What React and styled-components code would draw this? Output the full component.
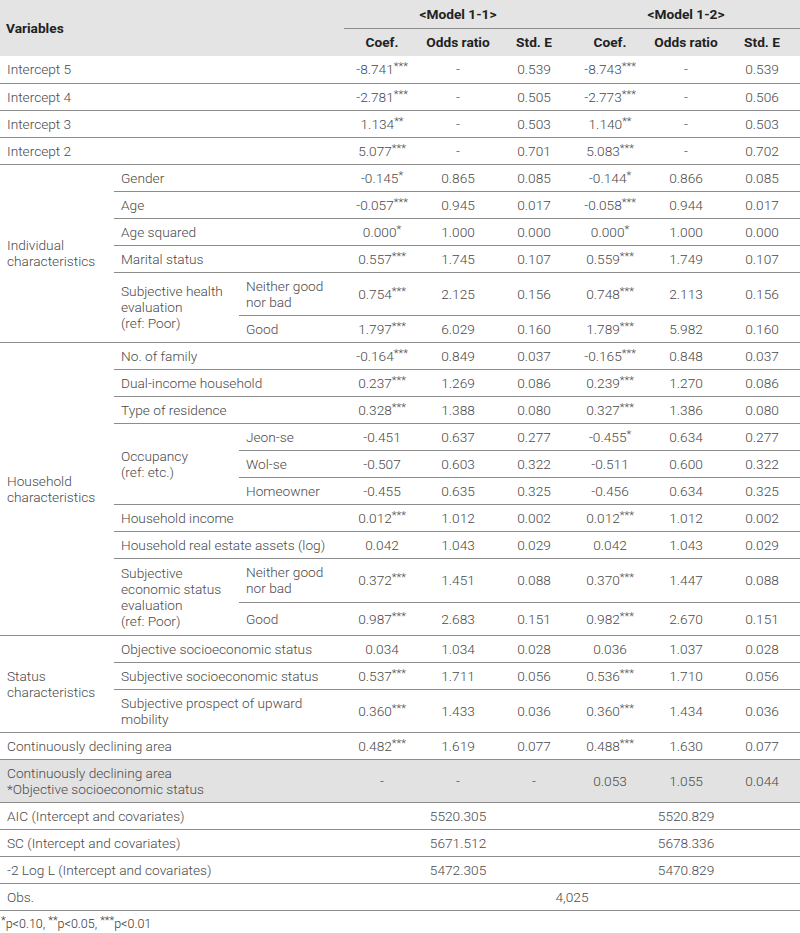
import React from "react";
import styled, { createGlobalStyle } from "styled-components";

const GlobalStyle = createGlobalStyle`
  body {
    margin: 0;
    background: #ffffff;
    font-family: Roboto, "Liberation Sans", sans-serif;
  }
`;

const split = (v) => {
  const m = v.match(/^(.*?)(\**)$/);
  return [m[1], m[2]];
};

const Value = ({ v }) => {
  const [num, stars] = split(v);
  return (
    <>
      {num}
      {stars && <Stars>{stars}</Stars>}
    </>
  );
};

const individual = [
  ["Gender", "-0.145*", "0.865", "0.085", "-0.144*", "0.866", "0.085"],
  ["Age", "-0.057***", "0.945", "0.017", "-0.058***", "0.944", "0.017"],
  ["Age squared", "0.000*", "1.000", "0.000", "0.000*", "1.000", "0.000"],
  ["Marital status", "0.557***", "1.745", "0.107", "0.559***", "1.749", "0.107"],
];

const household = [
  ["No. of family", "-0.164***", "0.849", "0.037", "-0.165***", "0.848", "0.037"],
  ["Dual-income household", "0.237***", "1.269", "0.086", "0.239***", "1.270", "0.086"],
  ["Type of residence", "0.328***", "1.388", "0.080", "0.327***", "1.386", "0.080"],
];

const occupancy = [
  ["Jeon-se", "-0.451", "0.637", "0.277", "-0.455*", "0.634", "0.277"],
  ["Wol-se", "-0.507", "0.603", "0.322", "-0.511", "0.600", "0.322"],
  ["Homeowner", "-0.455", "0.635", "0.325", "-0.456", "0.634", "0.325"],
];

const household2 = [
  ["Household income", "0.012***", "1.012", "0.002", "0.012***", "1.012", "0.002"],
  ["Household real estate assets (log)", "0.042", "1.043", "0.029", "0.042", "1.043", "0.029"],
];

const intercepts = [
  ["Intercept 5", "-8.741***", "-", "0.539", "-8.743***", "-", "0.539"],
  ["Intercept 4", "-2.781***", "-", "0.505", "-2.773***", "-", "0.506"],
  ["Intercept 3", "1.134**", "-", "0.503", "1.140**", "-", "0.503"],
  ["Intercept 2", "5.077***", "-", "0.701", "5.083***", "-", "0.702"],
];

const fits = [
  ["AIC (Intercept and covariates)", "5520.305", "5520.829"],
  ["SC (Intercept and covariates)", "5671.512", "5678.336"],
  ["-2 Log L (Intercept and covariates)", "5472.305", "5470.829"],
];

const Nums = ({ vals }) =>
  vals.map((v, i) => (
    <Cell key={i} $center>
      <Value v={v} />
    </Cell>
  ));

const App = () => {
  return (
    <Page>
      <GlobalStyle />
      <Table>
        <colgroup>
          <col style={{ width: 114 }} />
          <col style={{ width: 125 }} />
          <col style={{ width: 105 }} />
          {[0, 1, 2, 3, 4, 5].map((i) => (
            <col key={i} style={{ width: 76 }} />
          ))}
        </colgroup>
        <thead>
          <HeadRow>
            <HeadCell rowSpan={2} colSpan={3}>
              Variables
            </HeadCell>
            <ModelCell colSpan={3}>&lt;Model 1-1&gt;</ModelCell>
            <ModelCell colSpan={3}>&lt;Model 1-2&gt;</ModelCell>
          </HeadRow>
          <HeadRow>
            {["Coef.", "Odds ratio", "Std. E", "Coef.", "Odds ratio", "Std. E"].map(
              (h, i) => (
                <HeadCell key={i} $center>
                  {h}
                </HeadCell>
              )
            )}
          </HeadRow>
        </thead>
        <tbody>
          {intercepts.map(([label, ...vals]) => (
            <Row key={label}>
              <Cell colSpan={3}>{label}</Cell>
              <Nums vals={vals} />
            </Row>
          ))}

          {individual.map(([label, ...vals], i) => (
            <Row key={label}>
              {i === 0 && <Cell rowSpan={6}>Individual<br />characteristics</Cell>}
              <Cell colSpan={2}>{label}</Cell>
              <Nums vals={vals} />
            </Row>
          ))}
          <Row $h={43}>
            <Cell rowSpan={2}>
              Subjective health<br />evaluation<br />(ref: Poor)
            </Cell>
            <Cell>Neither good<br />nor bad</Cell>
            <Nums vals={["0.754***", "2.125", "0.156", "0.748***", "2.113", "0.156"]} />
          </Row>
          <Row>
            <Cell>Good</Cell>
            <Nums vals={["1.797***", "6.029", "0.160", "1.789***", "5.982", "0.160"]} />
          </Row>

          {household.map(([label, ...vals], i) => (
            <Row key={label}>
              {i === 0 && <Cell rowSpan={10}>Household<br />characteristics</Cell>}
              <Cell colSpan={2}>{label}</Cell>
              <Nums vals={vals} />
            </Row>
          ))}
          {occupancy.map(([label, ...vals], i) => (
            <Row key={label}>
              {i === 0 && <Cell rowSpan={3}>Occupancy<br />(ref: etc.)</Cell>}
              <Cell>{label}</Cell>
              <Nums vals={vals} />
            </Row>
          ))}
          {household2.map(([label, ...vals]) => (
            <Row key={label}>
              <Cell colSpan={2}>{label}</Cell>
              <Nums vals={vals} />
            </Row>
          ))}
          <Row $h={44}>
            <Cell rowSpan={2}>
              Subjective<br />economic status<br />evaluation<br />(ref: Poor)
            </Cell>
            <Cell>Neither good<br />nor bad</Cell>
            <Nums vals={["0.372***", "1.451", "0.088", "0.370***", "1.447", "0.088"]} />
          </Row>
          <Row $h={33}>
            <Cell>Good</Cell>
            <Nums vals={["0.987***", "2.683", "0.151", "0.982***", "2.670", "0.151"]} />
          </Row>

          <Row>
            <Cell rowSpan={3}>Status<br />characteristics</Cell>
            <Cell colSpan={2}>Objective socioeconomic status</Cell>
            <Nums vals={["0.034", "1.034", "0.028", "0.036", "1.037", "0.028"]} />
          </Row>
          <Row>
            <Cell colSpan={2}>Subjective socioeconomic status</Cell>
            <Nums vals={["0.537***", "1.711", "0.056", "0.536***", "1.710", "0.056"]} />
          </Row>
          <Row $h={43}>
            <Cell colSpan={2}>Subjective prospect of upward<br />mobility</Cell>
            <Nums vals={["0.360***", "1.433", "0.036", "0.360***", "1.434", "0.036"]} />
          </Row>

          <Row>
            <Cell colSpan={3}>Continuously declining area</Cell>
            <Nums vals={["0.482***", "1.619", "0.077", "0.488***", "1.630", "0.077"]} />
          </Row>
          <ShadedRow $h={43}>
            <Cell colSpan={3}>
              Continuously declining area<br />*Objective socioeconomic status
            </Cell>
            <Nums vals={["-", "-", "-", "0.053", "1.055", "0.044"]} />
          </ShadedRow>

          {fits.map(([label, a, b]) => (
            <Row key={label}>
              <Cell colSpan={3}>{label}</Cell>
              <Cell colSpan={3} $center>{a}</Cell>
              <Cell colSpan={3} $center>{b}</Cell>
            </Row>
          ))}
          <Row>
            <Cell colSpan={3}>Obs.</Cell>
            <Cell colSpan={6} $center>4,025</Cell>
          </Row>
        </tbody>
      </Table>
      <Footnote>
        <Stars>*</Stars>p&lt;0.10, <Stars>**</Stars>p&lt;0.05, <Stars>***</Stars>p&lt;0.01
      </Footnote>
    </Page>
  );
};

const Page = styled.div`
  width: 800px;
`;

const Table = styled.table`
  width: 800px;
  border-collapse: collapse;
  table-layout: fixed;
  font-family: Roboto, "Liberation Sans", sans-serif;
  font-size: 13.7px;
  line-height: 16px;
`;

const HeadRow = styled.tr`
  height: 28px;
`;

const Row = styled.tr`
  height: ${(p) => p.$h || 27}px;
`;

const ShadedRow = styled(Row)`
  background: #e2e2e2;
`;

const HeadCell = styled.th`
  background: #e4e4e4;
  color: #222222;
  font-weight: 700;
  padding: 0 6px;
  white-space: nowrap;
  text-align: ${(p) => (p.$center ? "center" : "left")};
  vertical-align: middle;
`;

const ModelCell = styled(HeadCell)`
  text-align: center;
  border-bottom: 1px solid #8c8c8c;
`;

const Cell = styled.td`
  padding: 5px 7px;
  color: #4a4a4a;
  font-weight: 300;
  text-align: ${(p) => (p.$center ? "center" : "left")};
  vertical-align: middle;
  border-bottom: 1px solid #8c8c8c;
  white-space: nowrap;
`;

const Stars = styled.sup`
  font-size: 11px;
  line-height: 0;
  vertical-align: 4px;
`;

const Footnote = styled.p`
  margin: 6px 0 0 1px;
  font-size: 12.5px;
  line-height: 14px;
  font-weight: 300;
  color: #333333;
`;

export default App;
